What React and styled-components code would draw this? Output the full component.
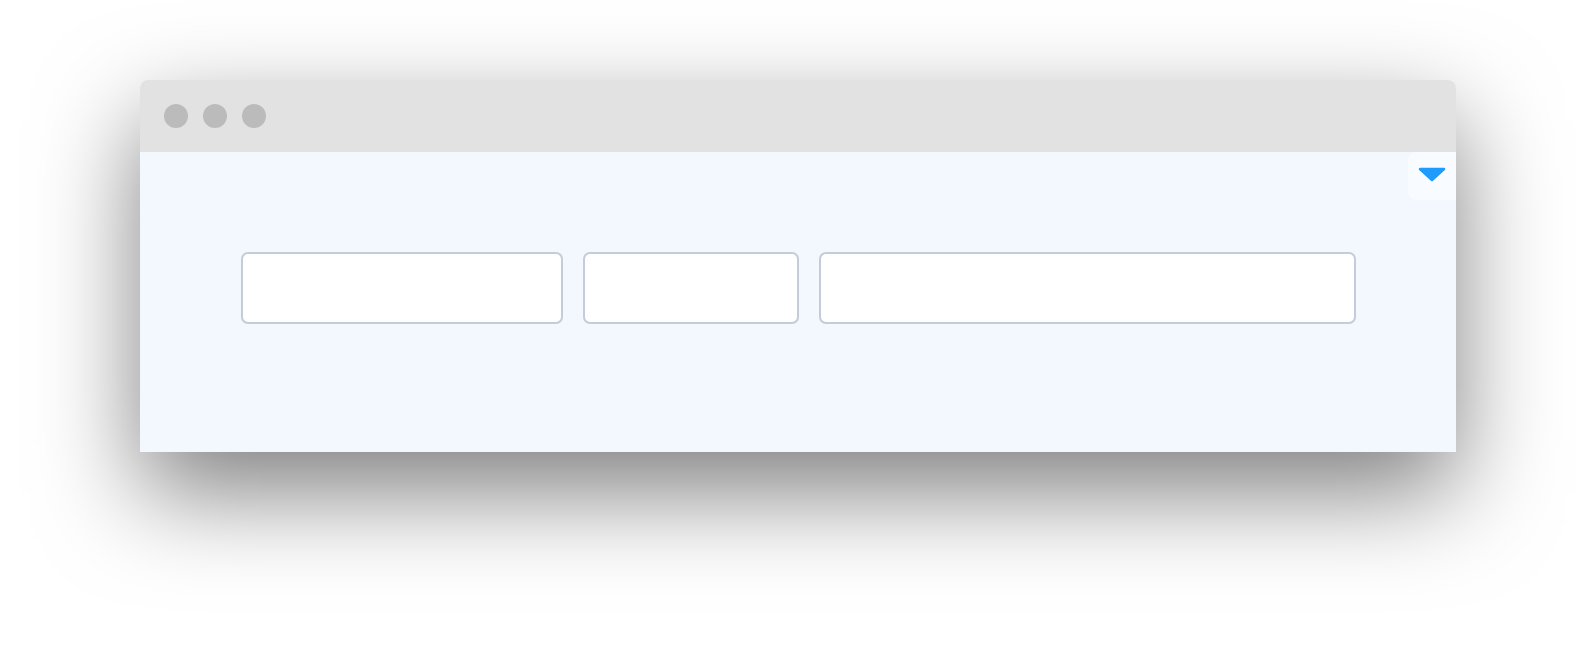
import * as React from "react";
import styled, { createGlobalStyle } from "styled-components";

const GlobalStyle = createGlobalStyle`
  html, body {
    margin: 0;
    padding: 0;
    background: #ffffff;
    font-family: "Liberation Sans", Arial, sans-serif;
  }
`;

function App() {
  return (
    <Page>
      <GlobalStyle />
      <Window>
        <TitleBar>
          <Dot />
          <Dot />
          <Dot />
        </TitleBar>
        <Content>
          <Fields>
            <Field $width={322} aria-label="first" />
            <Field $width={216} aria-label="second" />
            <Field $width={537} aria-label="third" />
          </Fields>
          <Toggle type="button" aria-label="toggle">
            <svg width="28" height="16" viewBox="0 0 28 16">
              <path
                d="M2 2 L26 2 L14 13 Z"
                fill="#1e9bfd"
                stroke="#1e9bfd"
                strokeWidth="2.5"
                strokeLinejoin="round"
              />
            </svg>
          </Toggle>
        </Content>
      </Window>
    </Page>
  );
}

const Page = styled.div`
  padding: 80px 140px 200px;
  box-sizing: border-box;
  width: 1596px;
  height: 652px;
  overflow: hidden;
`;

const Window = styled.div`
  width: 1316px;
  border-radius: 8px 8px 0 0;
  box-shadow: 0 40px 100px rgba(0, 0, 0, 0.5);
  overflow: hidden;
`;

const TitleBar = styled.div`
  height: 72px;
  background-color: #e2e2e2;
  display: flex;
  align-items: center;
  gap: 15px;
  padding-left: 24px;
`;

const Dot = styled.span`
  width: 24px;
  height: 24px;
  border-radius: 50%;
  background-color: #bbbbbb;
`;

const Content = styled.div`
  position: relative;
  height: 300px;
  background-color: #f3f7fe;
  padding: 100px 0 0 101px;
  box-sizing: border-box;
`;

const Fields = styled.div`
  display: flex;
  gap: 20px;
`;

const Field = styled.input`
  flex: none;
  width: ${(p) => p.$width}px;
  height: 72px;
  padding: 0;
  box-sizing: border-box;
  border: 2px solid #c3ccd8;
  border-radius: 7px;
  background-color: #ffffff;
  outline: none;
`;

const Toggle = styled.button`
  position: absolute;
  top: 0;
  right: 0;
  width: 48px;
  height: 48px;
  border: none;
  padding: 0 0 3px;
  border-radius: 8px 0 0 8px;
  background-color: #f8fbff;
  display: flex;
  align-items: center;
  justify-content: center;
  cursor: pointer;
`;

export default App;
